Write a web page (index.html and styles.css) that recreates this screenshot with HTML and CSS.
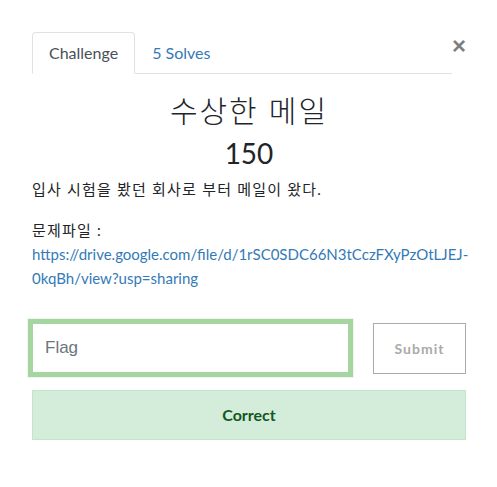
FILE: index.html
```html
<!DOCTYPE html>
<html lang="ko">
<head>
  <meta charset="UTF-8" />
  <meta name="viewport" content="width=device-width, initial-scale=1" />
  <title>수상한 메일</title>
  <link rel="stylesheet" href="styles.css">
</head>
<body>

  <div class="modal">
    <div class="modal-top">
      <ul class="tabs">
        <li class="tab active">Challenge</li>
        <li class="tab"><a href="#">5 Solves</a></li>
      </ul>
      <button class="close">&times;</button>
    </div>

    <h3 class="challenge-name">수상한 메일</h3>
    <h4 class="challenge-value">150</h4>

    <div class="challenge-desc">
      <p class="ko">입사 시험을 봤던 회사로 부터 메일이 왔다.</p>
      <p><span class="ko">문제파일 :</span><br>
        <a href="#">https://drive.google.com/file/d/1rSC0SDC66N3tCczFXyPzOtLJEJ-<wbr>0kqBh/view?usp=sharing</a>
      </p>
    </div>

    <div class="submit-row">
      <input class="flag-input" type="text" placeholder="Flag">
      <button class="submit-btn">Submit</button>
    </div>

    <div class="alert-correct">Correct</div>
  </div>

</body>
</html>
```

FILE: styles.css
```css
body {
  margin: 0;
  padding: 0;
  background-color: #fff;
  color: #212529;
  font-family: Lato, "Noto Sans CJK KR", sans-serif;
  font-size: 16px;
  line-height: 1.5;
}

.modal {
  width: 434px;
  padding: 32px 0 0 32px;
}

.modal-top {
  display: flex;
  align-items: flex-start;
}

.tabs {
  display: flex;
  width: 420px;
  margin: 0;
  padding: 0;
  list-style: none;
  border-bottom: 1px solid #dee2e6;
}

.tab {
  height: 40px;
  padding: 0 16px;
  display: flex;
  align-items: center;
  font-size: 16px;
  border: 1px solid transparent;
  border-top-left-radius: 4px;
  border-top-right-radius: 4px;
  margin-bottom: -1px;
}

.tab.active {
  color: #495057;
  background-color: #fff;
  border-color: #dee2e6 #dee2e6 #fff;
}

.tab a {
  color: #337ab7;
  text-decoration: none;
}

.close {
  margin-left: auto;
  padding: 0;
  border: 0;
  background: none;
  font-family: "Liberation Sans", sans-serif;
  font-size: 24px;
  font-weight: 700;
  line-height: 24px;
  color: #000;
  opacity: 0.5;
  width: 14px;
  margin-top: 2px;
}

.challenge-name {
  margin: 18px 0 0;
  text-align: center;
  font-size: 30px;
  font-weight: 300;
  line-height: 36px;
  letter-spacing: 2px;
}

.challenge-value {
  margin: 8px 0 0;
  text-align: center;
  font-size: 28px;
  font-weight: 400;
  line-height: 34px;
}

.challenge-desc {
  font-size: 15px;
  line-height: 24px;
}

.challenge-desc p {
  margin: 7px 0 17px;
}

.challenge-desc p + p {
  margin-top: 0;
}

.ko {
  letter-spacing: 1.2px;
}

.challenge-desc a {
  color: #337ab7;
  text-decoration: none;
  white-space: nowrap;
}

.submit-row {
  display: flex;
  justify-content: space-between;
  align-items: center;
  margin-top: 29px;
  margin-left: -4px;
}

.flag-input {
  box-sizing: border-box;
  width: 325px;
  height: 58px;
  padding: 0 12px;
  border: 5px solid #a6d5a1;
  outline: 1px solid #eef7ed;
  font-family: "Liberation Sans", sans-serif;
  font-size: 17px;
  color: #495057;
}

.flag-input::placeholder {
  color: #6c757d;
}

.submit-btn {
  box-sizing: border-box;
  width: 93px;
  height: 51px;
  border: 1px solid #aaa;
  background: #fff;
  color: #aaa;
  font-family: Lato, sans-serif;
  font-size: 14px;
  font-weight: 700;
  letter-spacing: 1px;
}

.alert-correct {
  box-sizing: border-box;
  margin-top: 13px;
  height: 50px;
  display: flex;
  align-items: center;
  justify-content: center;
  background-color: #d4edda;
  border: 1px solid #c3e6cb;
  color: #155724;
  font-size: 16px;
  font-weight: 700;
}
```
